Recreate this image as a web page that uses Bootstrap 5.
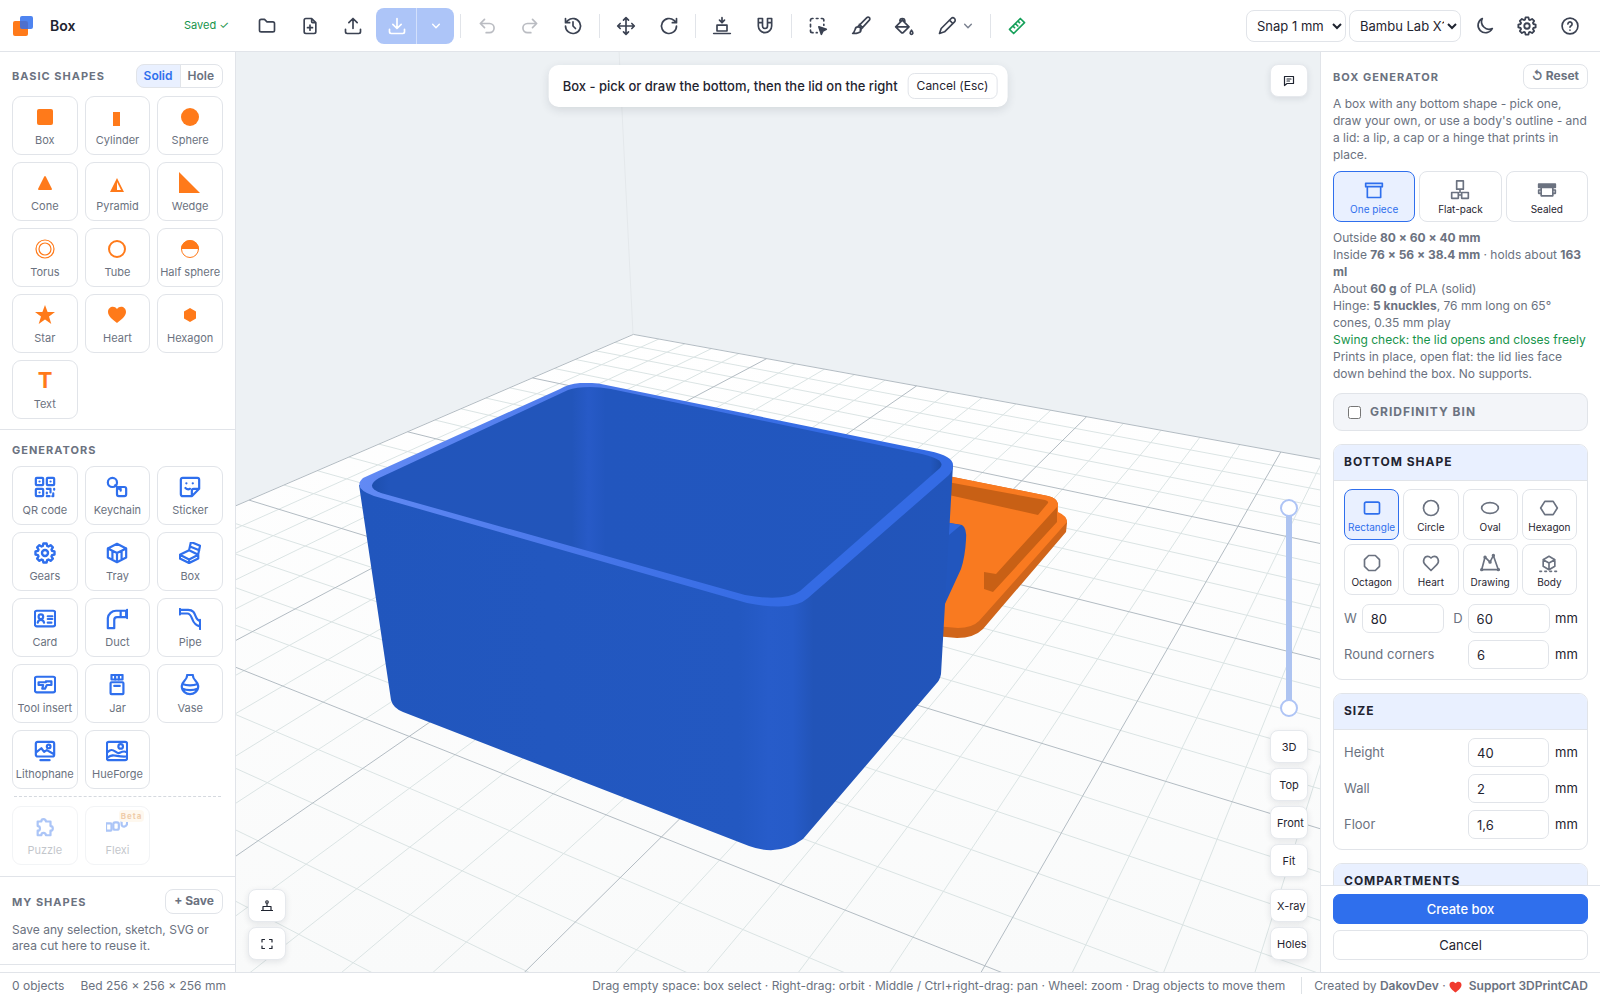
<!DOCTYPE html>
<html lang="en">
<head>
<meta charset="utf-8">
<meta name="viewport" content="width=device-width, initial-scale=1">
<title>Box - 3DPrintCAD</title>
<link href="https://cdn.jsdelivr.net/npm/bootstrap@5.3.0/dist/css/bootstrap.min.css" rel="stylesheet">
<style>
:root{--ink:#1f2430;--dim:#6b7280;--line:#e1e4e9;--accent:#2f6fed;--accent-soft:#e9f0ff;--orange:#ff7a1a}
body{font-family:Inter,"Liberation Sans",sans-serif;font-size:13px;line-height:17px;color:var(--ink);background:#fff}
.ico{width:20px;height:20px;fill:none;stroke:currentColor;stroke-width:2;stroke-linecap:round;stroke-linejoin:round;flex:none;display:block}
.topbar{height:52px;border-bottom:1px solid var(--line);padding-right:10px}
.brand-area{width:247px;padding:0 18px 0 12px}
.brand-area .doc-name{font-size:14px;font-weight:600;margin-left:16px}
.saved-flag{font-size:11px;color:#16934a}
.tools{gap:3px}
.tool-btn{width:40px;height:36px;padding:0;border:0;color:#3b4252;display:flex;align-items:center;justify-content:center}
.tool-btn:disabled{border:0;color:#3b4252;opacity:.35}
.tool-btn.with-menu{width:57px;padding-left:10px;justify-content:flex-start;gap:6px}
.tool-btn.with-menu .tiny{color:#7b8290}
.tool-btn.measure{color:#16a05a}
.ico.tiny{width:10px;height:10px}
.export-group .btn{height:36px;padding:0;border:0;border-radius:8px;background:#adc5f8;color:#fff;display:flex;align-items:center;justify-content:center}
.export-group .btn:first-child{width:41px}
.export-group .btn:last-child{width:38px;border-left:1px solid #d3e0fc}
.tool-sep{width:1px;height:24px;background:var(--line);margin:0 3px}
.bar-select{height:32px;border:1px solid var(--line);border-radius:8px;background:#fff;color:var(--ink);font-size:13px;padding:0 0 0 6px}
.snap-select{width:100px}.printer-select{width:112px}
.side-left{width:236px;border-right:1px solid var(--line)}
.side-left section{padding:12px 12px 10px;border-bottom:1px solid var(--line)}
.side-left .gen-section{padding-bottom:11px}
.caps{font-size:11px;line-height:16px;font-weight:700;letter-spacing:1px;color:var(--dim);text-transform:uppercase;margin:0}
.head-row{margin-bottom:8px}
.seg .btn{font-size:12px;line-height:16px;font-weight:600;padding:3px 7px;color:var(--dim);border:1px solid var(--line);border-radius:8px}
.seg .btn:last-child{padding-right:8px}
.seg .btn.active{background:var(--accent-soft);color:var(--accent);border-color:var(--line)}
.tiles{display:grid;grid-template-columns:repeat(3,minmax(0,1fr));gap:7px}
.tile{height:59px;padding:9px 0 6px;border:1px solid var(--line);border-radius:9px;background:#fff;color:var(--dim);font-size:11px;line-height:14px;display:flex;flex-direction:column;align-items:center;gap:5px;white-space:nowrap;position:relative}
.tile .ico{width:22px;height:22px;color:var(--accent);stroke-width:2.4}
.tile .solid-ico{fill:var(--orange);stroke:none;overflow:visible;color:var(--orange)}
.tile.faded,.tile.faded:disabled{opacity:.4;border-color:var(--line);color:var(--dim)}
.beta-tag{position:absolute;top:3px;right:5px;font-size:8px;line-height:12px;font-weight:700;letter-spacing:1px;color:#d9822b;background:#fdf0d8;border-radius:4px;padding:0 2px}
.dash-rule{border-top:1px dashed #d5d9df;margin:7px 2px 9px}
.mini-btn{font-size:12px;line-height:16px;font-weight:700;color:var(--dim);border:1px solid var(--line);border-radius:8px;padding:3px 8px 4px}
.note{font-size:12px;line-height:16px;color:var(--dim);margin:0}
.viewport{background:#edf1f4;overflow:hidden}
.scene{width:100%;height:100%;position:absolute;inset:0}
.float-btn{width:38px;height:33px;padding:0 6px;border:1px solid #e6e9ed;border-radius:8px;background:#fff;font-size:11px;line-height:14px;color:var(--ink);box-shadow:0 2px 6px rgba(30,40,60,.10);white-space:nowrap}
.float-btn .ico{width:12px;height:12px;margin:0 auto;stroke-width:2.4}
.prompt-bar{top:13px;left:50%;transform:translateX(-50%);background:#fff;border-radius:10px;box-shadow:0 3px 10px rgba(30,40,60,.12);padding:8px 10px 8px 14px;gap:10px;white-space:nowrap;font-weight:500}
.prompt-bar .btn{font-size:12px;line-height:16px;padding:4px 8px;border:1px solid var(--line);border-radius:7px;color:var(--ink)}
.pos-tr{top:12px;right:12px}.pos-bl{left:12px;bottom:12px}.pos-br{right:12px;bottom:12px}
.stack{display:flex;flex-direction:column;align-items:center;gap:5px}
.stack .group-end{margin-bottom:7px}
.layer-range{position:relative;width:18px;height:218px;margin-bottom:8px}
.layer-range::before{content:"";position:absolute;left:6px;top:9px;bottom:9px;width:6px;background:#aec4f1}
.layer-range input{appearance:none;-webkit-appearance:none;position:absolute;left:50%;top:50%;width:218px;height:18px;margin:0;background:none;transform:translate(-50%,-50%) rotate(-90deg);pointer-events:none}
.layer-range input::-webkit-slider-thumb{-webkit-appearance:none;width:18px;height:18px;border-radius:50%;background:#fff;border:2px solid #aec4f5;pointer-events:auto}
.side-right{width:280px;border-left:1px solid var(--line)}
.scroll-area{padding:12px 12px 0;overflow:hidden;min-height:0}
.panel-head{margin-bottom:6px}
.pick{height:51px;padding:8px 0 0;border:1px solid var(--line);border-radius:8px;background:#fff;color:var(--ink);font-size:10px;line-height:14px;display:flex;flex-direction:column;align-items:center;gap:2px;white-space:nowrap}
.pick .ico{color:var(--dim);stroke-width:2}
.pick.active{border-color:var(--accent);background:var(--accent-soft);color:var(--accent)}
.pick.active .ico{color:var(--accent)}
.pick-3{display:grid;grid-template-columns:repeat(3,minmax(0,1fr));gap:4px;margin:8px 0 7px}
.pick-4{display:grid;grid-template-columns:repeat(4,minmax(0,1fr));gap:4px;margin-bottom:2px}
.info-text{font-size:12px;line-height:17px;color:var(--dim)}
.info-text strong{font-weight:700}
.ok-text{color:#16934a;white-space:nowrap}
.toggle-card{height:38px;margin-top:11px;border:1px solid var(--line);border-radius:9px;background:#f3f5f9;padding:0 14px;gap:9px;font-size:12px;letter-spacing:1px}
.toggle-card input{width:13px;height:13px;margin:0}
.group-card{border:1px solid var(--line);border-radius:9px;margin-top:13px;overflow:hidden}
.group-card h3{font-size:12px;line-height:16px;font-weight:700;letter-spacing:1px;margin:0;padding:9px 10px 10px;background:var(--accent-soft);border-bottom:1px solid var(--line);text-transform:uppercase}
.group-body{padding:8px 10px 10px;display:flex;flex-direction:column;gap:7px}
.num-row{display:flex;align-items:center;gap:6px;height:29px}
.num-row.pair{gap:5px}
.num-row label{color:var(--dim)}
.num-row input{width:81px;height:29px;border:1px solid var(--line);border-radius:7px;padding:0 8px;font-size:13px;color:var(--ink);background:#fff}
.num-row .grow-in{flex:1;min-width:0;width:0}
.num-row .unit{width:22px}
.panel-foot{border-top:1px solid var(--line);padding:8px 12px 12px;display:grid;gap:6px}
.panel-foot .btn{height:30px;padding:0;font-size:13px;line-height:28px;border-radius:7px;border:1px solid var(--line);color:var(--ink)}
.panel-foot .go-btn{background:var(--accent);border-color:var(--accent);color:#fff;font-weight:500}
.statusbar{height:28px;border-top:1px solid var(--line);font-size:12px;color:var(--dim);padding:0 12px 2px;white-space:nowrap}
.statusbar a{color:var(--dim);font-weight:600;text-decoration:none}
</style>
<script src="https://cdn.jsdelivr.net/npm/bootstrap@5.3.0/dist/js/bootstrap.bundle.min.js" defer></script>
</head>
<body class="vh-100 d-flex flex-column overflow-hidden">

<svg width="0" height="0" class="position-absolute" aria-hidden="true"><defs>
<symbol id="i-folder" viewBox="0 0 24 24"><path d="M5 4h4l3 3h7a2 2 0 0 1 2 2v8a2 2 0 0 1-2 2H5a2 2 0 0 1-2-2V6a2 2 0 0 1 2-2"/></symbol>
<symbol id="i-fileplus" viewBox="0 0 24 24"><path d="M14 3v4a1 1 0 0 0 1 1h4M17 21H7a2 2 0 0 1-2-2V5a2 2 0 0 1 2-2h7l5 5v11a2 2 0 0 1-2 2zM12 11v6M9 14h6"/></symbol>
<symbol id="i-upload" viewBox="0 0 24 24"><path d="M3 16v3a2 2 0 0 0 2 2h14a2 2 0 0 0 2-2v-3M7 8l5-5 5 5M12 3v12"/></symbol>
<symbol id="i-download" viewBox="0 0 24 24"><path d="M3 16v3a2 2 0 0 0 2 2h14a2 2 0 0 0 2-2v-3M7 10l5 5 5-5M12 3v12"/></symbol>
<symbol id="i-chev" viewBox="0 0 24 24"><path d="M4 8l8 8 8-8" stroke-width="3.500"/></symbol>
<symbol id="i-undo" viewBox="0 0 24 24"><path d="M9 14l-5-5 5-5M4 9h11a5.500 5.500 0 0 1 0 11h-4"/></symbol>
<symbol id="i-redo" viewBox="0 0 24 24"><path d="M15 14l5-5-5-5M20 9H9a5.500 5.500 0 0 0 0 11h4"/></symbol>
<symbol id="i-history" viewBox="0 0 24 24"><path d="M3 12a9 9 0 1 0 3-6.700L3 8M3 3v5h5M12 7v5l3 3"/></symbol>
<symbol id="i-move" viewBox="0 0 24 24"><path d="M12 3v18M3 12h18M9 5l3-3 3 3M9 19l3 3 3-3M5 9l-3 3 3 3M19 9l3 3-3 3"/></symbol>
<symbol id="i-rotate" viewBox="0 0 24 24"><path d="M21 12a9 9 0 1 1-3-6.700L21 8M21 3v5h-5"/></symbol>
<symbol id="i-drop" viewBox="0 0 24 24"><path d="M6 11h12v7H6zM2 21h20M12 2v6M9 5l3 3 3-3"/></symbol>
<symbol id="i-magnet" viewBox="0 0 24 24"><path d="M4 12V3h5v9a3 3 0 0 0 6 0V3h5v9a8 8 0 0 1-16 0M4 8h5M15 8h5"/></symbol>
<symbol id="i-select" viewBox="0 0 24 24"><path d="M3 6V5a2 2 0 0 1 2-2h1M10 3h2M16 3h1a2 2 0 0 1 2 2v1M19 10v1M3 10v3M3 17v1a2 2 0 0 0 2 2h1M10 20h1"/><path d="M13 13l9 3-4 2-2 4z" fill="currentColor"/></symbol>
<symbol id="i-brush" viewBox="0 0 24 24"><path d="M2 21c2-1 2-3 3-5a3.500 3.500 0 1 1 4 4c-2 1-4 1-7 1zM8 13L19 2a2 2 0 0 1 3 3L11 17M10 10l4 4"/></symbol>
<symbol id="i-bucket" viewBox="0 0 24 24"><path d="M10 5l-8 8 7 7a2 2 0 0 0 2 0l7-7zM3 13h15M7 6a3 3 0 0 1 6 0v2M21 17c-3 4-1 5 0 5s3-1 0-5z"/></symbol>
<symbol id="i-pencil" viewBox="0 0 24 24"><path d="M3 21l2-6L17 3a2.500 2.500 0 0 1 4 4L9 19zM15 5l4 4"/></symbol>
<symbol id="i-ruler" viewBox="0 0 24 24"><path d="M3 16L16 3l5 5L8 21zM13 6l2 2M10 9l3 3M7 12l2 2"/></symbol>
<symbol id="i-moon" viewBox="0 0 24 24"><path d="M10 3a9 9 0 1 0 12 12A9 9 0 0 1 10 3z"/></symbol>
<symbol id="i-gear" viewBox="1 1 22 22"><path d="M9.800 5l.6-2.500h3.200l.6 2.500 1.200.5 2.200-1.300 2.250 2.250-1.350 2.150.5 1.200 2.500.6v3.200l-2.500.6-.5 1.200 1.350 2.150-2.250 2.250-2.200-1.300-1.200.5-.6 2.500h-3.200l-.6-2.500-1.200-.5-2.200 1.300-2.250-2.250 1.350-2.150-.5-1.200-2.500-.6v-3.200l2.500-.6.5-1.200-1.350-2.150L6.400 4.200l2.200 1.300z"/><circle cx="12" cy="12" r="3"/></symbol>
<symbol id="i-help" viewBox="0 0 24 24"><circle cx="12" cy="12" r="9.500"/><path d="M9.500 9.500a2.500 2.500 0 1 1 3.800 2.200c-.9.500-1.300 1-1.300 1.800M12 17v.1"/></symbol>
<symbol id="i-chat" viewBox="0 0 24 24"><path d="M3 3h18v14H8l-5 4zM8 8h8M8 12h5"/></symbol>
<symbol id="i-bed" viewBox="0 0 24 24"><circle cx="12" cy="4" r="2.500"/><path d="M12 7v6M4 13h16v7M4 13v7M1 21h22"/></symbol>
<symbol id="i-full" viewBox="0 0 24 24"><path d="M2 8V3h5M17 3h5v5M22 16v5h-5M7 21H2v-5"/></symbol>
<symbol id="i-qr" viewBox="0 0 24 24"><rect x="2" y="2" width="8" height="8" rx="1"/><rect x="14" y="2" width="8" height="8" rx="1"/><rect x="2" y="14" width="8" height="8" rx="1"/><path d="M6 6h.1M18 6h.1M6 18h.1M14 14h4v4M22 14v1M14 22h3M21 19v3h-1M14 18v1"/></symbol>
<symbol id="i-key" viewBox="0 0 24 24"><circle cx="7" cy="7" r="5"/><rect x="12" y="12" width="10" height="10" rx="2"/><path d="M10 10l4 4M14 14h2v2"/></symbol>
<symbol id="i-sticker" viewBox="0 0 24 24"><path d="M14 22H4a2 2 0 0 1-2-2V4a2 2 0 0 1 2-2h16a2 2 0 0 1 2 2v10l-8 8v-6a2 2 0 0 1 2-2h6M8 8h.1M15 8h.1M7 13c1 1 3 2 5 1"/></symbol>
<symbol id="i-tray" viewBox="0 0 24 24"><path d="M12 2l10 5v10l-10 5-10-5V7zM2 7l10 5 10-5M12 12v10M7 10v9M17 10v9"/></symbol>
<symbol id="i-boxopen" viewBox="0 0 24 24"><path d="M1 14l10-5 10 5v4l-10 5-10-5zM1 14l10 5 10-5M11 19v4M11 9l2-9 10 4-2 9M12 5l10 4"/></symbol>
<symbol id="i-idcard" viewBox="0 0 24 24"><rect x="1" y="3" width="22" height="17" rx="2"/><circle cx="7.500" cy="9.500" r="2.500"/><path d="M4 16c1-4 6-4 7 0M15 9h5M15 12h5M15 16h4"/></symbol>
<symbol id="i-duct" viewBox="0 0 24 24"><path d="M2 22V11a9 9 0 0 1 9-8h11v7H12a3 3 0 0 0-3 3v9zM23 2v9M16 3v7"/></symbol>
<symbol id="i-pipe" viewBox="0 0 24 24"><path d="M1 1v6M1 2h9c10 0 6 11 13 12M1 6h8c7 0 3 12 14 14M23 13v10"/></symbol>
<symbol id="i-toolin" viewBox="0 0 24 24"><rect x="1" y="3" width="22" height="17" rx="2"/><path d="M5 9h8V8h6v4h-5l-2 4H9l1-4H5z"/></symbol>
<symbol id="i-jar" viewBox="0 0 24 24"><rect x="6" y="1" width="12" height="5"/><path d="M10 2v4M14 2v4M6 9h12a1 1 0 0 1 1 1v11a1 1 0 0 1-1 1H6a1 1 0 0 1-1-1V10a1 1 0 0 1 1-1zM9 13h6"/></symbol>
<symbol id="i-vase" viewBox="0 0 24 24"><path d="M9 1h6M9 1c0 6-6 7-6 12 0 6 5 9 9 9s9-3 9-9c0-5-6-6-6-12M4 11c4 2 12 2 16 0M4 16c4 2 12 2 16 0"/></symbol>
<symbol id="i-litho" viewBox="0 0 24 24"><rect x="2" y="2" width="20" height="16" rx="2"/><path d="M3 13l5-4 3 4 3-2 7 4M7 22h10"/><circle cx="16" cy="7" r="2"/></symbol>
<symbol id="i-hue" viewBox="0 0 24 24"><rect x="1" y="2" width="22" height="20" rx="2"/><path d="M2 13c6-6 9 3 13 1s5-2 7-1M2 19c6-5 10 0 20-1"/><circle cx="16" cy="7" r="2.500"/></symbol>
<symbol id="i-puzzle" viewBox="0 0 24 24"><path d="M4 6h4a2.500 2.500 0 1 1 5 0h5v5a2.500 2.500 0 1 1 0 5v5h-5a2.500 2.500 0 0 0-5 0H4v-5a2.500 2.500 0 0 0 0-5z"/></symbol>
<symbol id="i-flexi" viewBox="0 0 24 24"><rect x="0" y="8" width="6" height="8" rx="1"/><rect x="8" y="7" width="6" height="8" rx="2"/><path d="M17 5v4c0 4 6 3 6-1V4"/></symbol>
<symbol id="i-onepiece" viewBox="0 0 24 24"><path d="M2 4h20v4H2zM4 8v13h16V8"/></symbol>
<symbol id="i-flat" viewBox="0 0 24 24"><path d="M8 1h8v10H8zM2 15h8v7H2zM14 15h8v7h-8zM12 11v4M10 18h4"/></symbol>
<symbol id="i-sealed" viewBox="0 0 24 24"><path d="M2 5h20v4H2zM5 9v10h14V9M5 12H2v4h3M19 12h3v4h-3M2 7h20"/></symbol>
<symbol id="i-rect" viewBox="0 0 24 24"><rect x="3" y="5" width="18" height="14" rx="2"/></symbol>
<symbol id="i-circle" viewBox="0 0 24 24"><circle cx="12" cy="12" r="9"/></symbol>
<symbol id="i-oval" viewBox="0 0 24 24"><ellipse cx="12" cy="12" rx="10" ry="6.500"/></symbol>
<symbol id="i-hex" viewBox="0 0 24 24"><path d="M7 4h10l5 8-5 8H7l-5-8z"/></symbol>
<symbol id="i-oct" viewBox="0 0 24 24"><path d="M8 3h8l5 5v8l-5 5H8l-5-5V8z"/></symbol>
<symbol id="i-heart" viewBox="0 0 24 24"><path d="M12 21l-7-7C1 10 4 4 8 4c2 0 3 1 4 2 1-1 2-2 4-2 4 0 7 6 3 10z"/></symbol>
<symbol id="i-draw" viewBox="0 0 24 24"><path d="M2 20L6 5l6 6 4-8 6 17z"/><path d="M2 20h.1M6 5h.1M12 11h.1M16 3h.1M22 20h.1" stroke-width="4"/></symbol>
<symbol id="i-body" viewBox="0 0 24 24"><path d="M12 4l7 4v8l-7 4-7-4V8zM5 8l7 4 7-4M12 12v8"/><path d="M1 22h22" stroke-dasharray="2 4"/></symbol>
</defs></svg>

<header class="topbar d-flex align-items-center flex-shrink-0">
  <div class="brand-area d-flex align-items-center flex-shrink-0">
    <svg width="22" height="22" viewBox="0 0 22 22" role="img" aria-label="3DPrintCAD"><rect x="1" y="6" width="15" height="15" rx="2" fill="#ff7a1a"/><rect x="8" y="1" width="13" height="13" rx="2" fill="#2f6fed" fill-opacity=".85"/></svg>
    <span class="doc-name me-auto">Box</span>
    <span class="saved-flag">Saved ✓</span>
  </div>
  <div class="tools d-flex align-items-center">
    <button class="btn tool-btn" aria-label="Open"><svg class="ico"><use href="#i-folder"/></svg></button>
    <button class="btn tool-btn" aria-label="New"><svg class="ico"><use href="#i-fileplus"/></svg></button>
    <button class="btn tool-btn" aria-label="Import"><svg class="ico"><use href="#i-upload"/></svg></button>
    <div class="btn-group export-group"><button class="btn" aria-label="Export"><svg class="ico"><use href="#i-download"/></svg></button><button class="btn" aria-label="Export options"><svg class="ico tiny"><use href="#i-chev"/></svg></button></div>
    <span class="tool-sep"></span>
    <button class="btn tool-btn" disabled aria-label="Undo"><svg class="ico"><use href="#i-undo"/></svg></button>
    <button class="btn tool-btn" disabled aria-label="Redo"><svg class="ico"><use href="#i-redo"/></svg></button>
    <button class="btn tool-btn" aria-label="History"><svg class="ico"><use href="#i-history"/></svg></button>
    <span class="tool-sep"></span>
    <button class="btn tool-btn" aria-label="Move"><svg class="ico"><use href="#i-move"/></svg></button>
    <button class="btn tool-btn" aria-label="Rotate"><svg class="ico"><use href="#i-rotate"/></svg></button>
    <span class="tool-sep"></span>
    <button class="btn tool-btn" aria-label="Drop to bed"><svg class="ico"><use href="#i-drop"/></svg></button>
    <button class="btn tool-btn" aria-label="Magnet"><svg class="ico"><use href="#i-magnet"/></svg></button>
    <span class="tool-sep"></span>
    <button class="btn tool-btn" aria-label="Select area"><svg class="ico"><use href="#i-select"/></svg></button>
    <button class="btn tool-btn" aria-label="Brush"><svg class="ico"><use href="#i-brush"/></svg></button>
    <button class="btn tool-btn" aria-label="Fill"><svg class="ico"><use href="#i-bucket"/></svg></button>
    <button class="btn tool-btn with-menu" aria-label="Sketch"><svg class="ico"><use href="#i-pencil"/></svg><svg class="ico tiny"><use href="#i-chev"/></svg></button>
    <span class="tool-sep"></span>
    <button class="btn tool-btn measure" aria-label="Measure"><svg class="ico"><use href="#i-ruler"/></svg></button>
  </div>
  <div class="tools d-flex align-items-center ms-auto">
    <select class="bar-select snap-select" aria-label="Snap"><option>Snap 1 mm</option></select>
    <select class="bar-select printer-select" aria-label="Printer"><option>Bambu Lab X1C</option></select>
    <button class="btn tool-btn" aria-label="Dark mode"><svg class="ico"><use href="#i-moon"/></svg></button>
    <button class="btn tool-btn" aria-label="Settings"><svg class="ico"><use href="#i-gear"/></svg></button>
    <button class="btn tool-btn" aria-label="Help"><svg class="ico"><use href="#i-help"/></svg></button>
  </div>
</header>

<div class="d-flex flex-grow-1" style="min-height:0">
  <aside class="side-left flex-shrink-0 overflow-hidden">
    <section>
      <div class="head-row d-flex align-items-center justify-content-between">
        <h2 class="caps">Basic shapes</h2>
        <div class="btn-group seg"><button class="btn active">Solid</button><button class="btn">Hole</button></div>
      </div>
      <div class="tiles">
        <button class="btn tile"><svg class="ico solid-ico" viewBox="0 0 22 22"><rect x="3" y="3" width="16" height="16" rx="2"/></svg>Box</button>
        <button class="btn tile"><svg class="ico solid-ico" viewBox="0 0 22 22"><rect x="7" y="6" width="7" height="14"/></svg>Cylinder</button>
        <button class="btn tile"><svg class="ico solid-ico" viewBox="0 0 22 22"><circle cx="11" cy="11" r="9"/></svg>Sphere</button>
        <button class="btn tile"><svg class="ico solid-ico" viewBox="0 0 22 22"><path d="M10 5q1-2 2 0l6 12q0 1-1 1H5q-1 0-1-1z"/></svg>Cone</button>
        <button class="btn tile"><svg class="ico solid-ico" viewBox="0 0 22 22"><path fill-rule="evenodd" d="M11 6l7 14H4zM11 10v8h4z"/></svg>Pyramid</button>
        <button class="btn tile"><svg class="ico solid-ico" viewBox="0 0 22 22"><path d="M0 0l21 21H0z"/></svg>Wedge</button>
        <button class="btn tile"><svg class="ico solid-ico" viewBox="0 0 22 22"><g fill="none" stroke="currentColor" stroke-width="1.200"><circle cx="11" cy="11" r="9"/><circle cx="11" cy="11" r="6"/></g></svg>Torus</button>
        <button class="btn tile"><svg class="ico solid-ico" viewBox="0 0 22 22"><circle cx="11" cy="11" r="8" fill="none" stroke="currentColor" stroke-width="2"/></svg>Tube</button>
        <button class="btn tile"><svg class="ico solid-ico" viewBox="0 0 22 22"><circle cx="11" cy="11" r="8.500" fill="none" stroke="currentColor" stroke-width="1"/><path d="M2 11a9 9 0 0 1 18 0z"/></svg>Half sphere</button>
        <button class="btn tile"><svg class="ico solid-ico" viewBox="0 0 22 22"><path d="M11 1l2.600 7H21l-6 4.500L17.300 20 11 15.500 4.700 20 7 12.500 1 8h7.400z"/></svg>Star</button>
        <button class="btn tile"><svg class="ico solid-ico" viewBox="0 0 22 22"><path d="M11 19C7 16 2 12 2 8c0-5 6-7 9-3 3-4 9-2 9 3 0 4-5 8-9 11z"/></svg>Heart</button>
        <button class="btn tile"><svg class="ico solid-ico" viewBox="0 0 22 22"><path d="M11 4l6 3.500v7L11 18l-6-3.500v-7z"/></svg>Hexagon</button>
        <button class="btn tile"><svg class="ico solid-ico" viewBox="0 0 22 22"><text x="11" y="18" text-anchor="middle" font-size="22" font-weight="700" font-family="Inter,sans-serif">T</text></svg>Text</button>
      </div>
    </section>
    <section class="gen-section">
      <h2 class="caps head-row">Generators</h2>
      <div class="tiles">
        <button class="btn tile"><svg class="ico"><use href="#i-qr"/></svg>QR code</button>
        <button class="btn tile"><svg class="ico"><use href="#i-key"/></svg>Keychain</button>
        <button class="btn tile"><svg class="ico"><use href="#i-sticker"/></svg>Sticker</button>
        <button class="btn tile"><svg class="ico"><use href="#i-gear"/></svg>Gears</button>
        <button class="btn tile"><svg class="ico"><use href="#i-tray"/></svg>Tray</button>
        <button class="btn tile"><svg class="ico"><use href="#i-boxopen"/></svg>Box</button>
        <button class="btn tile"><svg class="ico"><use href="#i-idcard"/></svg>Card</button>
        <button class="btn tile"><svg class="ico"><use href="#i-duct"/></svg>Duct</button>
        <button class="btn tile"><svg class="ico"><use href="#i-pipe"/></svg>Pipe</button>
        <button class="btn tile"><svg class="ico"><use href="#i-toolin"/></svg>Tool insert</button>
        <button class="btn tile"><svg class="ico"><use href="#i-jar"/></svg>Jar</button>
        <button class="btn tile"><svg class="ico"><use href="#i-vase"/></svg>Vase</button>
        <button class="btn tile"><svg class="ico"><use href="#i-litho"/></svg>Lithophane</button>
        <button class="btn tile"><svg class="ico"><use href="#i-hue"/></svg>HueForge</button>
      </div>
      <div class="dash-rule"></div>
      <div class="tiles">
        <button class="btn tile faded" disabled><svg class="ico"><use href="#i-puzzle"/></svg>Puzzle</button>
        <button class="btn tile faded" disabled><svg class="ico"><use href="#i-flexi"/></svg>Flexi<span class="beta-tag">Beta</span></button>
      </div>
    </section>
    <section>
      <div class="head-row d-flex align-items-center justify-content-between">
        <h2 class="caps">My shapes</h2>
        <button class="btn mini-btn">+ Save</button>
      </div>
      <p class="note">Save any selection, sketch, SVG or area cut here to reuse it.</p>
    </section>
  </aside>

  <main class="viewport position-relative flex-grow-1">
    <svg class="scene" viewBox="236 52 1084 920" preserveAspectRatio="xMidYMid slice" role="img" aria-label="Box with hinged lid on the print bed">
      <defs>
        <linearGradient id="floorFill" x1="0" y1="334" x2="0" y2="972" gradientUnits="userSpaceOnUse"><stop offset="0" stop-color="#fff"/><stop offset="1" stop-color="#f9fafa"/></linearGradient>
        <linearGradient id="bodyFill" x1="359" y1="0" x2="953" y2="0" gradientUnits="userSpaceOnUse"><stop offset="0" stop-color="#2156bd"/><stop offset=".64" stop-color="#2358c1"/><stop offset=".69" stop-color="#275cca"/><stop offset=".73" stop-color="#265bc8"/><stop offset=".765" stop-color="#2254b8"/><stop offset="1" stop-color="#2255bb"/></linearGradient>
        <linearGradient id="cavityFill" x1="372" y1="0" x2="942" y2="0" gradientUnits="userSpaceOnUse"><stop offset="0" stop-color="#1d4fae"/><stop offset=".03" stop-color="#2255bb"/><stop offset=".35" stop-color="#2255ba"/><stop offset=".38" stop-color="#275ac7"/><stop offset=".41" stop-color="#2256be"/><stop offset=".98" stop-color="#2257bf"/><stop offset="1" stop-color="#1d4ca6"/></linearGradient>
        <linearGradient id="rimFill" x1="359" y1="480" x2="770" y2="600" gradientUnits="userSpaceOnUse"><stop offset="0" stop-color="#628af4"/><stop offset=".5" stop-color="#4a78ea"/><stop offset="1" stop-color="#346be4"/></linearGradient>
      </defs>
      <path d="M633 334L1534 498 1424 1757-285 730z" fill="url(#floorFill)"/>
      <path d="M619 50L633 334" stroke="#e4e8eb" fill="none"/>
      <path id="minorLines" fill="none" stroke="#dbe4e4" stroke-width="1"/>
      <path id="majorLines" fill="none" stroke="#b3bcc3" stroke-width="1"/>
      <!-- lid -->
      <path d="M940 474L953 477 1048 496Q1057 498 1058 504V513Q1067 516 1067 523L1066 532 983 629Q974 638 957 638L935 636z" fill="#d0651a"/>
      <path d="M940 474L953 477 1048 496Q1057 498 1058 504V512Q1067 516 1067 522L979 621Q972 628 958 628L935 626z" fill="#f97a20"/>
      <path d="M940 480L953 483 1045 500Q1049 501 1048 503L1038 515 940 493zM1057 507V522L993 592 984 589V572L996 574z" fill="#c86015"/>
      <!-- hinge -->
      <path d="M940 520L950 523 962 525Q967 528 966 540 965 557 961 569L944 606H930z" fill="#2256be"/>
      <path d="M949 523L961 525 949 535z" fill="#2f67dd"/>
      <!-- body -->
      <path d="M359 485L391 700Q393 708 403 712L749 846Q779 857 803 839L936 684Q940 680 941 674L953 465 769 500z" fill="url(#bodyFill)"/>
      <path d="M363 478L560 389Q568 384 580 383H592Q598 383 606 385L929 451Q953 456 953 465 953 470 949 475L808 598Q793 612 747 603L374 496Q352 488 363 478z" fill="url(#rimFill)"/>
      <path d="M379 478L568 390Q576 387 590 387 600 387 611 389L922 454Q947 460 940 468L800 591Q785 602 745 595L381 493Q364 487 379 478z" fill="url(#cavityFill)"/>
    </svg>

    <div class="prompt-bar position-absolute d-flex align-items-center">
      <span>Box - pick or draw the bottom, then the lid on the right</span>
      <button class="btn">Cancel (Esc)</button>
    </div>
    <button class="btn float-btn position-absolute pos-tr" aria-label="Comments"><svg class="ico"><use href="#i-chat"/></svg></button>
    <div class="stack position-absolute pos-bl">
      <button class="btn float-btn" aria-label="Bed"><svg class="ico"><use href="#i-bed"/></svg></button>
      <button class="btn float-btn" aria-label="Fullscreen"><svg class="ico"><use href="#i-full"/></svg></button>
    </div>
    <div class="stack position-absolute pos-br">
      <div class="layer-range">
        <input type="range" min="0" max="100" value="0" aria-label="Lower cut">
        <input type="range" min="0" max="100" value="100" aria-label="Upper cut">
      </div>
      <button class="btn float-btn">3D</button>
      <button class="btn float-btn">Top</button>
      <button class="btn float-btn">Front</button>
      <button class="btn float-btn group-end">Fit</button>
      <button class="btn float-btn">X-ray</button>
      <button class="btn float-btn">Holes</button>
    </div>
  </main>

  <aside class="side-right flex-shrink-0 d-flex flex-column">
    <div class="scroll-area flex-grow-1">
      <div class="panel-head d-flex align-items-center justify-content-between">
        <h2 class="caps">Box generator</h2>
        <button class="btn mini-btn">↺ Reset</button>
      </div>
      <p class="info-text m-0">A box with any bottom shape - pick one, draw your own, or use a body's outline - and a lid: a lip, a cap or a hinge that prints in place.</p>
      <div class="pick-3">
        <button class="btn pick active"><svg class="ico"><use href="#i-onepiece"/></svg>One piece</button>
        <button class="btn pick"><svg class="ico"><use href="#i-flat"/></svg>Flat-pack</button>
        <button class="btn pick"><svg class="ico"><use href="#i-sealed"/></svg>Sealed</button>
      </div>
      <div class="info-text">
        <div>Outside <strong>80 × 60 × 40 mm</strong></div>
        <div>Inside <strong>76 × 56 × 38.4 mm</strong> · holds about <strong>163 ml</strong></div>
        <div>About <strong>60 g</strong> of PLA (solid)</div>
        <div>Hinge: <strong>5 knuckles</strong>, 76 mm long on 65° cones, 0.35 mm play</div>
        <div class="ok-text">Swing check: the lid opens and closes freely</div>
        <div>Prints in place, open flat: the lid lies face down behind the box. No supports.</div>
      </div>
      <label class="toggle-card caps d-flex align-items-center"><input type="checkbox"> Gridfinity bin</label>
      <div class="group-card">
        <h3>Bottom shape</h3>
        <div class="group-body">
          <div class="pick-4">
            <button class="btn pick active"><svg class="ico"><use href="#i-rect"/></svg>Rectangle</button>
            <button class="btn pick"><svg class="ico"><use href="#i-circle"/></svg>Circle</button>
            <button class="btn pick"><svg class="ico"><use href="#i-oval"/></svg>Oval</button>
            <button class="btn pick"><svg class="ico"><use href="#i-hex"/></svg>Hexagon</button>
            <button class="btn pick"><svg class="ico"><use href="#i-oct"/></svg>Octagon</button>
            <button class="btn pick"><svg class="ico"><use href="#i-heart"/></svg>Heart</button>
            <button class="btn pick"><svg class="ico"><use href="#i-draw"/></svg>Drawing</button>
            <button class="btn pick"><svg class="ico"><use href="#i-body"/></svg>Body</button>
          </div>
          <div class="num-row pair"><label for="w">W</label><input id="w" class="grow-in" value="80"><label for="d" class="ps-1">D</label><input id="d" class="grow-in" value="60"><span class="unit">mm</span></div>
          <div class="num-row"><label for="rc" class="me-auto">Round corners</label><input id="rc" value="6"><span class="unit">mm</span></div>
        </div>
      </div>
      <div class="group-card">
        <h3>Size</h3>
        <div class="group-body">
          <div class="num-row"><label for="hh" class="me-auto">Height</label><input id="hh" value="40"><span class="unit">mm</span></div>
          <div class="num-row"><label for="wa" class="me-auto">Wall</label><input id="wa" value="2"><span class="unit">mm</span></div>
          <div class="num-row"><label for="fl" class="me-auto">Floor</label><input id="fl" value="1,6"><span class="unit">mm</span></div>
        </div>
      </div>
      <div class="group-card"><h3>Compartments</h3></div>
    </div>
    <div class="panel-foot">
      <button class="btn go-btn">Create box</button>
      <button class="btn">Cancel</button>
    </div>
  </aside>
</div>

<footer class="statusbar d-flex align-items-center flex-shrink-0">
  <span class="me-3">0 objects</span><span>Bed 256 × 256 × 256 mm</span>
  <span class="ms-auto">Drag empty space: box select · Right-drag: orbit · Middle / Ctrl+right-drag: pan · Wheel: zoom · Drag objects to move them</span>
  <span class="border-start ms-3 ps-2"><span class="ps-1">Created by <a href="#">DakovDev</a> · <svg width="13" height="12" viewBox="0 0 14 13" aria-hidden="true"><path d="M7 12.500C4 10 .5 7.500.5 4 .5.500 5-.500 7 2.500 9-.500 13.500.500 13.500 4c0 3.500-3.500 6-6.500 8.500z" fill="#f03a2e"/></svg>&nbsp; <a href="#">Support 3DPrintCAD</a></span></span>
</footer>

<script>
// Perspective projection of the print bed: one unit is a 10 mm cell, the origin is the far corner.
const project = (u, v) => {
  const w = 1 - 0.01111 * u - 0.019185 * v;
  return ((633.4 + 18.14 * u - 30.404 * v) / w).toFixed(2) + " " + ((334.4 + 0.8585 * u + 1.452 * v) / w).toFixed(2);
};
const bed = 25.6;
let minor = "", major = "";
for (let i = 0; i <= 25; i++) {
  const seg = "M" + project(i, 0) + "L" + project(i, bed) + "M" + project(0, i) + "L" + project(bed, i);
  if (i % 5) minor += seg; else major += seg;
}
document.getElementById("minorLines").setAttribute("d", minor);
document.getElementById("majorLines").setAttribute("d", major);
</script>
</body>
</html>
